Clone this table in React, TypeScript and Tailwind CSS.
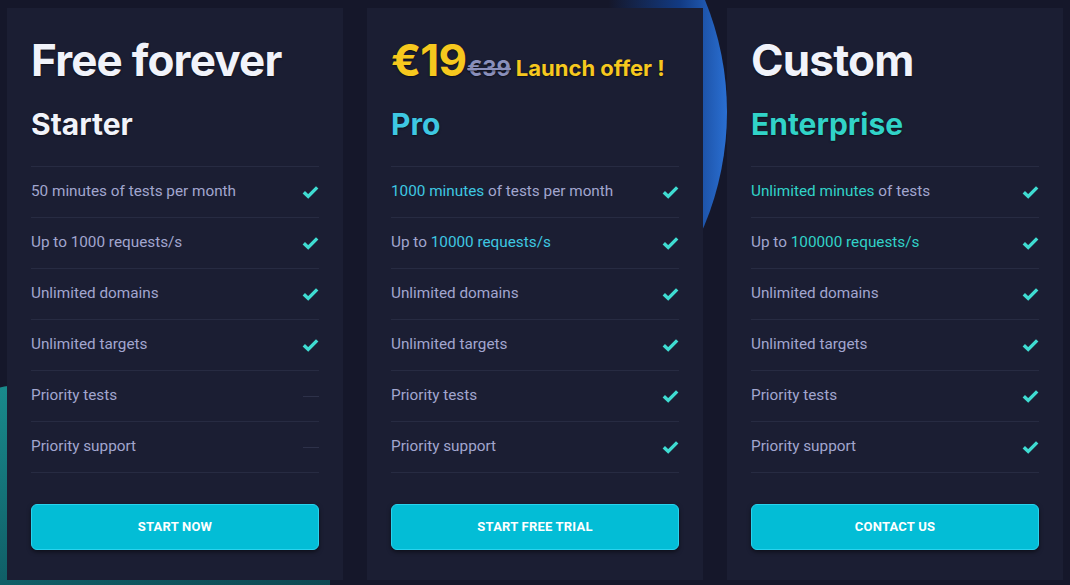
type Feature = {
  hl?: string;
  text: string;
  on: boolean;
};

type Plan = {
  name: string;
  nameColor: string;
  cta: string;
  features: Feature[];
  price: React.ReactNode;
};

const plans: Plan[] = [
  {
    name: "Starter",
    nameColor: "text-[#f1f3fa]",
    cta: "START NOW",
    price: <span className="text-[#f1f3fa]">Free forever</span>,
    features: [
      { text: "50 minutes of tests per month", on: true },
      { text: "Up to 1000 requests/s", on: true },
      { text: "Unlimited domains", on: true },
      { text: "Unlimited targets", on: true },
      { text: "Priority tests", on: false },
      { text: "Priority support", on: false },
    ],
  },
  {
    name: "Pro",
    nameColor: "text-[#3ec8e2]",
    cta: "START FREE TRIAL",
    price: (
      <span className="flex items-baseline">
        <span className="text-[#f6c81e]">€19</span>
        <span className="ml-[1px] text-[22px] leading-[22px] tracking-normal text-[#8a8fbb] line-through decoration-2">€39</span>
        <span className="ml-[5px] text-[22px] leading-[22px] tracking-normal text-[#f6c81e]">Launch offer !</span>
      </span>
    ),
    features: [
      { hl: "1000 minutes", text: " of tests per month", on: true },
      { text: "Up to ", hl: "10000 requests/s", on: true },
      { text: "Unlimited domains", on: true },
      { text: "Unlimited targets", on: true },
      { text: "Priority tests", on: true },
      { text: "Priority support", on: true },
    ],
  },
  {
    name: "Enterprise",
    nameColor: "text-[#31d3c8]",
    cta: "CONTACT US",
    price: <span className="text-[#f1f3fa]">Custom</span>,
    features: [
      { hl: "Unlimited minutes", text: " of tests", on: true },
      { text: "Up to ", hl: "100000 requests/s", on: true },
      { text: "Unlimited domains", on: true },
      { text: "Unlimited targets", on: true },
      { text: "Priority tests", on: true },
      { text: "Priority support", on: true },
    ],
  },
];

function CheckMark() {
  return (
    <svg width="17" height="14" viewBox="0 0 17 14" className="text-[#3fdcd2]">
      <path
        d="M1.8 7.2 L6.2 11.4 L15.2 2.4"
        fill="none"
        stroke="currentColor"
        strokeWidth="3.4"
        strokeLinejoin="miter"
      />
    </svg>
  );
}

function FeatureRow({ f, hlColor }: { f: Feature; hlColor: string }) {
  const hlFirst = f.hl && !f.text.startsWith("Up to");
  return (
    <div className="flex h-[51px] items-center justify-between border-t border-[#272b42]">
      <span className="-mt-[1px] text-[15.3px] text-[#a2a6cf]">
        {f.hl && hlFirst ? <span className={hlColor}>{f.hl}</span> : null}
        {f.text}
        {f.hl && !hlFirst ? <span className={hlColor}>{f.hl}</span> : null}
      </span>
      {f.on ? (
        <CheckMark />
      ) : (
        <span className="h-[1px] w-[16px] bg-[#2d3149]" />
      )}
    </div>
  );
}

function PlanCard({ plan, hlColor }: { plan: Plan; hlColor: string }) {
  return (
    <div className="relative flex h-[572px] w-[336px] flex-col bg-[#1b1e33] px-6">
      <div className="h-[158px] font-['Inter',sans-serif] font-bold [text-shadow:0_1px_2px_rgba(0,0,0,0.55)]">
        <div className="mt-[30px] h-[44px] text-[44px] leading-[44px] tracking-[-0.8px]">{plan.price}</div>
        <div className={`mt-[27px] text-[30px] leading-[30px] ${plan.nameColor}`}>{plan.name}</div>
      </div>
      <div className="border-b border-[#272b42]">
        {plan.features.map((f, i) => (
          <FeatureRow key={i} f={f} hlColor={hlColor} />
        ))}
      </div>
      <button className="mt-[31px] h-[46px] w-full rounded-[6px] border border-[#29d3ee] bg-[#03bdd6] text-[13px] font-bold tracking-[0.2px] text-white shadow-[0_2px_4px_rgba(0,0,0,0.5)]">
        {plan.cta}
      </button>
    </div>
  );
}

export default function App() {
  return (
    <div className="relative h-[585px] w-[1070px] overflow-hidden bg-[#15172a] font-['Roboto',sans-serif]">
      {/* background decorations */}
      <div className="absolute left-[135px] top-[-184px] h-[592px] w-[592px] rounded-full bg-[linear-gradient(90deg,rgba(21,23,42,0)_0%,rgba(21,23,42,0)_80%,#123a82_92%,#2a6fd2_100%)]" />
      <div className="absolute left-[-60px] top-[385px] h-[260px] w-[390px] rounded-tl-[80px] bg-[linear-gradient(160deg,#1a8f90_0%,#0f5a63_60%,#0d3d48_100%)]" />

      <div className="relative flex gap-6 pl-[7px] pt-[8px]">
        {plans.map((p, i) => (
          <PlanCard
            key={p.name}
            plan={p}
            hlColor={i === 2 ? "text-[#31d3c8]" : "text-[#3ec8e2]"}
          />
        ))}
      </div>
    </div>
  );
}
